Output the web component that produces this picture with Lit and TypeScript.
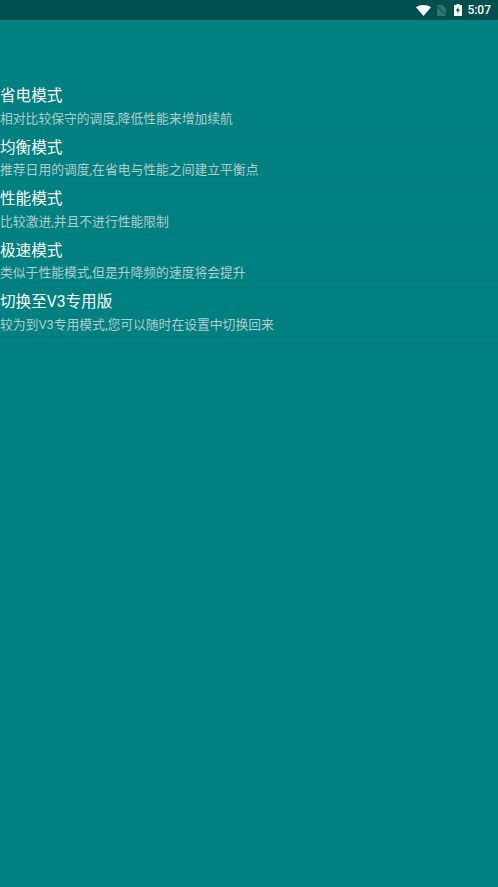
import { LitElement, html, css } from "lit";
import { customElement } from "lit/decorators.js";

const items = [
  ["省电模式", "相对比较保守的调度,降低性能来增加续航"],
  ["均衡模式", "推荐日用的调度,在省电与性能之间建立平衡点"],
  ["性能模式", "比较激进,并且不进行性能限制"],
  ["极速模式", "类似于性能模式,但是升降频的速度将会提升"],
  ["切换至V3专用版", "较为到V3专用模式,您可以随时在设置中切换回来"],
];

@customElement("app-root")
export class AppRoot extends LitElement {
  static styles = css`
    :host { display: block; height: 887px; background: #008080; overflow: hidden;
      font-family: Roboto, "Noto Sans CJK SC", sans-serif; }
    .status { height: 20px; background: #005050; display: flex; align-items: center; justify-content: flex-end; padding-right: 7px; color: #fff; }
    .time { font-size: 12px; font-weight: 500; margin-left: 5px; line-height: 20px; }
    .wifi { margin-right: 6px; }
    .sim { margin-right: 8px; }
    .list { padding-top: 60.7px; }
    .item { height: 51.5px; box-sizing: border-box; border-bottom: 1px solid #007979; padding-top: 5.5px; }
    .title { font-size: 15.6px; line-height: 20px; color: #fff; }
    .desc { font-size: 12.8px; line-height: 16px; margin-top: 4.5px; color: #b3cccc; }
    svg { display: block; }
  `;
  render() {
    return html`
      <div class="status">
        <svg class="wifi" width="15" height="11" viewBox="0 0 15 11"><path d="M0 2.300C2 .8 4.600 0 7.500 0S13 .8 15 2.300L7.500 11z" fill="#fff"/></svg>
        <svg class="sim" width="9" height="11" viewBox="0 0 9 11"><path d="M0 0h5.500L9 3.500V11H0z" fill="#2f7573"/><path d="M0 1l9 9.500" stroke="#004545" stroke-width="1"/></svg>
        <svg width="8" height="12" viewBox="0 0 8 12"><path d="M2.500 0h3v1H8v11H0V1h2.500z" fill="#fff"/><path d="M4.500 2.500L2 7h1.800L3.300 10 6 5.500H4.200z" fill="#005050"/></svg>
        <span class="time">5:07</span>
      </div>
      <div class="list">
        ${items.map(([t, d]) => html`<div class="item"><div class="title">${t}</div><div class="desc">${d}</div></div>`)}
      </div>
    `;
  }
}
